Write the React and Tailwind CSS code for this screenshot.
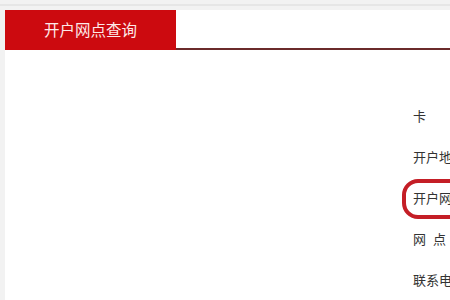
import React from 'react';

const rows = [
  { label: '卡号', cls: 'tracking-[26px]' },
  { label: '开户地区', cls: '' },
  { label: '开户网点', cls: '' },
  { label: '网点地址', cls: 'tracking-[7px]' },
  { label: '联系电话', cls: '' },
];

export default function App() {
  return (
    <div
      className="relative w-[450px] h-[300px] overflow-hidden bg-[#f2f2f2] flex flex-col"
      style={{ fontFamily: '"Noto Sans CJK SC", "Noto Sans", sans-serif' }}
    >
      {/* top strip */}
      <div className="h-[10px] shrink-0 pt-[4px]">
        <div className="h-[2px] bg-[#e6e6e6]" />
      </div>

      <div className="flex-1 ml-[5px] bg-white flex flex-col">
        {/* tab header */}
        <div className="flex h-[40px] shrink-0">
          <div className="w-[171px] h-full bg-[#cc0a0f] text-[#fde8e8] text-[15.5px] flex items-center justify-center">
            开户网点查询
          </div>
          <div className="flex-1 border-b-2 border-[#6b2b2b]" />
        </div>

        {/* form labels */}
        <div className="flex flex-col pl-[408px] pt-[57px] gap-[23px] text-[13px] leading-[18px] text-[#333] whitespace-nowrap">
          {rows.map((r) => (
            <div key={r.label} className={r.cls}>
              {r.label}
            </div>
          ))}
        </div>
      </div>

      {/* hand-drawn red circle */}
      <div className="absolute left-[402px] top-[179px] w-[80px] h-[40px] border-[4px] border-[#c41e26] rounded-[16px]" />
    </div>
  );
}
